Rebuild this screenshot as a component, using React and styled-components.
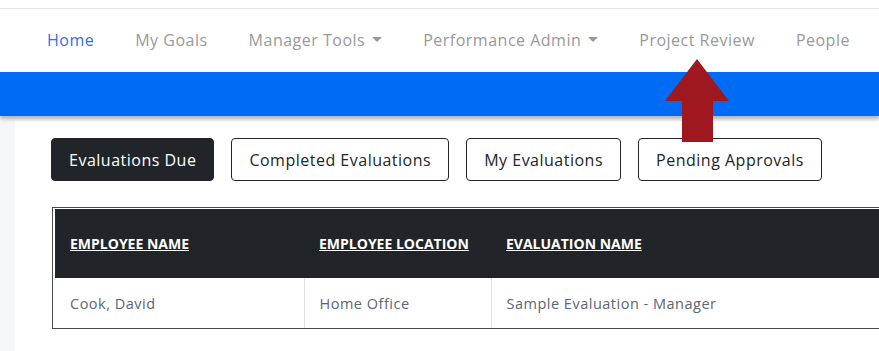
import React from "react";
import styled, { createGlobalStyle } from "styled-components";

const GlobalStyle = createGlobalStyle`
  body {
    margin: 0;
    background: #ffffff;
    font-family: "Open Sans", "Liberation Sans", sans-serif;
  }
`;

const Page = styled.div`
  position: relative;
  width: 879px;
  height: 351px;
  overflow: hidden;
  padding-top: 8px;
  box-sizing: border-box;
  background: #ffffff;
`;

const Nav = styled.nav`
  display: flex;
  align-items: center;
  height: 64px;
  padding-left: 26px;
  padding-bottom: 2px;
  border-top: 1px solid #e6e6e6;
  box-sizing: border-box;
`;

const NavLink = styled.a`
  display: flex;
  align-items: center;
  gap: 6px;
  padding: 0 20px 0 21px;
  font-size: 16px;
  letter-spacing: 0.5px;
  color: ${(p) => (p.$active ? "#2f6fe8" : "#999999")};
  text-decoration: none;
  white-space: nowrap;
`;

const Caret = styled.span`
  width: 0;
  height: 0;
  margin-left: 1px;
  border-left: 5px solid transparent;
  border-right: 5px solid transparent;
  border-top: 5px solid #999999;
`;

const BlueBar = styled.div`
  height: 44px;
  background: #006cf5;
  box-shadow: 0 3px 4px rgba(0, 0, 0, 0.28);
  position: relative;
  z-index: 1;
`;

const Main = styled.div`
  background: #f6f7f9;
  padding: 5px 0 0 15px;
`;

const Card = styled.div`
  background: #ffffff;
  padding: 17px 0 30px 36px;
`;

const ButtonRow = styled.div`
  display: flex;
  gap: 17px;
`;

const TabButton = styled.button`
  height: 43px;
  padding: 0 17px;
  border-radius: 4px;
  border: 1px solid #212529;
  background: ${(p) => (p.$active ? "#212529" : "#ffffff")};
  color: ${(p) => (p.$active ? "#ffffff" : "#212529")};
  font-family: inherit;
  font-size: 16px;
  letter-spacing: 0.5px;
  white-space: nowrap;
`;

const TableFrame = styled.div`
  margin-top: 26px;
  margin-left: 1px;
  border: 1px solid #4a4a4a;
  border-right: none;
  padding: 1px 0 0 2px;
`;

const Table = styled.table`
  width: 100%;
  border-collapse: collapse;
`;

const HeadCell = styled.th`
  height: 69px;
  background: #212529;
  color: #ffffff;
  text-align: left;
  font-size: 14px;
  font-weight: 700;
  text-decoration: underline;
  padding: 0 0 0 15px;
  width: ${(p) => p.$w || "auto"};
`;

const Cell = styled.td`
  height: 50px;
  padding: 0 0 0 15px;
  font-size: 14.5px;
  letter-spacing: 0.5px;
  color: #5a6675;
  border-left: ${(p) => (p.$first ? "none" : "1px solid #dee2e6")};
`;

const Arrow = styled.svg`
  position: absolute;
  left: 664px;
  top: 58px;
  z-index: 2;
`;

export default function App() {
  return (
    <>
      <GlobalStyle />
      <Page>
        <Nav>
          <NavLink $active>Home</NavLink>
          <NavLink>My Goals</NavLink>
          <NavLink>
            Manager Tools <Caret />
          </NavLink>
          <NavLink>
            Performance Admin <Caret />
          </NavLink>
          <NavLink>Project Review</NavLink>
          <NavLink>People</NavLink>
        </Nav>
        <BlueBar />
        <Main>
          <Card>
            <ButtonRow>
              <TabButton $active>Evaluations Due</TabButton>
              <TabButton>Completed Evaluations</TabButton>
              <TabButton>My Evaluations</TabButton>
              <TabButton>Pending Approvals</TabButton>
            </ButtonRow>
            <TableFrame>
              <Table>
                <thead>
                  <tr>
                    <HeadCell $w="234px">EMPLOYEE NAME</HeadCell>
                    <HeadCell $w="172px">EMPLOYEE LOCATION</HeadCell>
                    <HeadCell>EVALUATION NAME</HeadCell>
                  </tr>
                </thead>
                <tbody>
                  <tr>
                    <Cell $first>Cook, David</Cell>
                    <Cell>Home Office</Cell>
                    <Cell>Sample Evaluation - Manager</Cell>
                  </tr>
                </tbody>
              </Table>
            </TableFrame>
          </Card>
        </Main>
        <Arrow width="66" height="86" viewBox="0 0 66 86">
          <path d="M33 1 L65 43 L49 43 L49 84 L18 84 L18 43 L1 43 Z" fill="#a0181f" />
        </Arrow>
      </Page>
    </>
  );
}
